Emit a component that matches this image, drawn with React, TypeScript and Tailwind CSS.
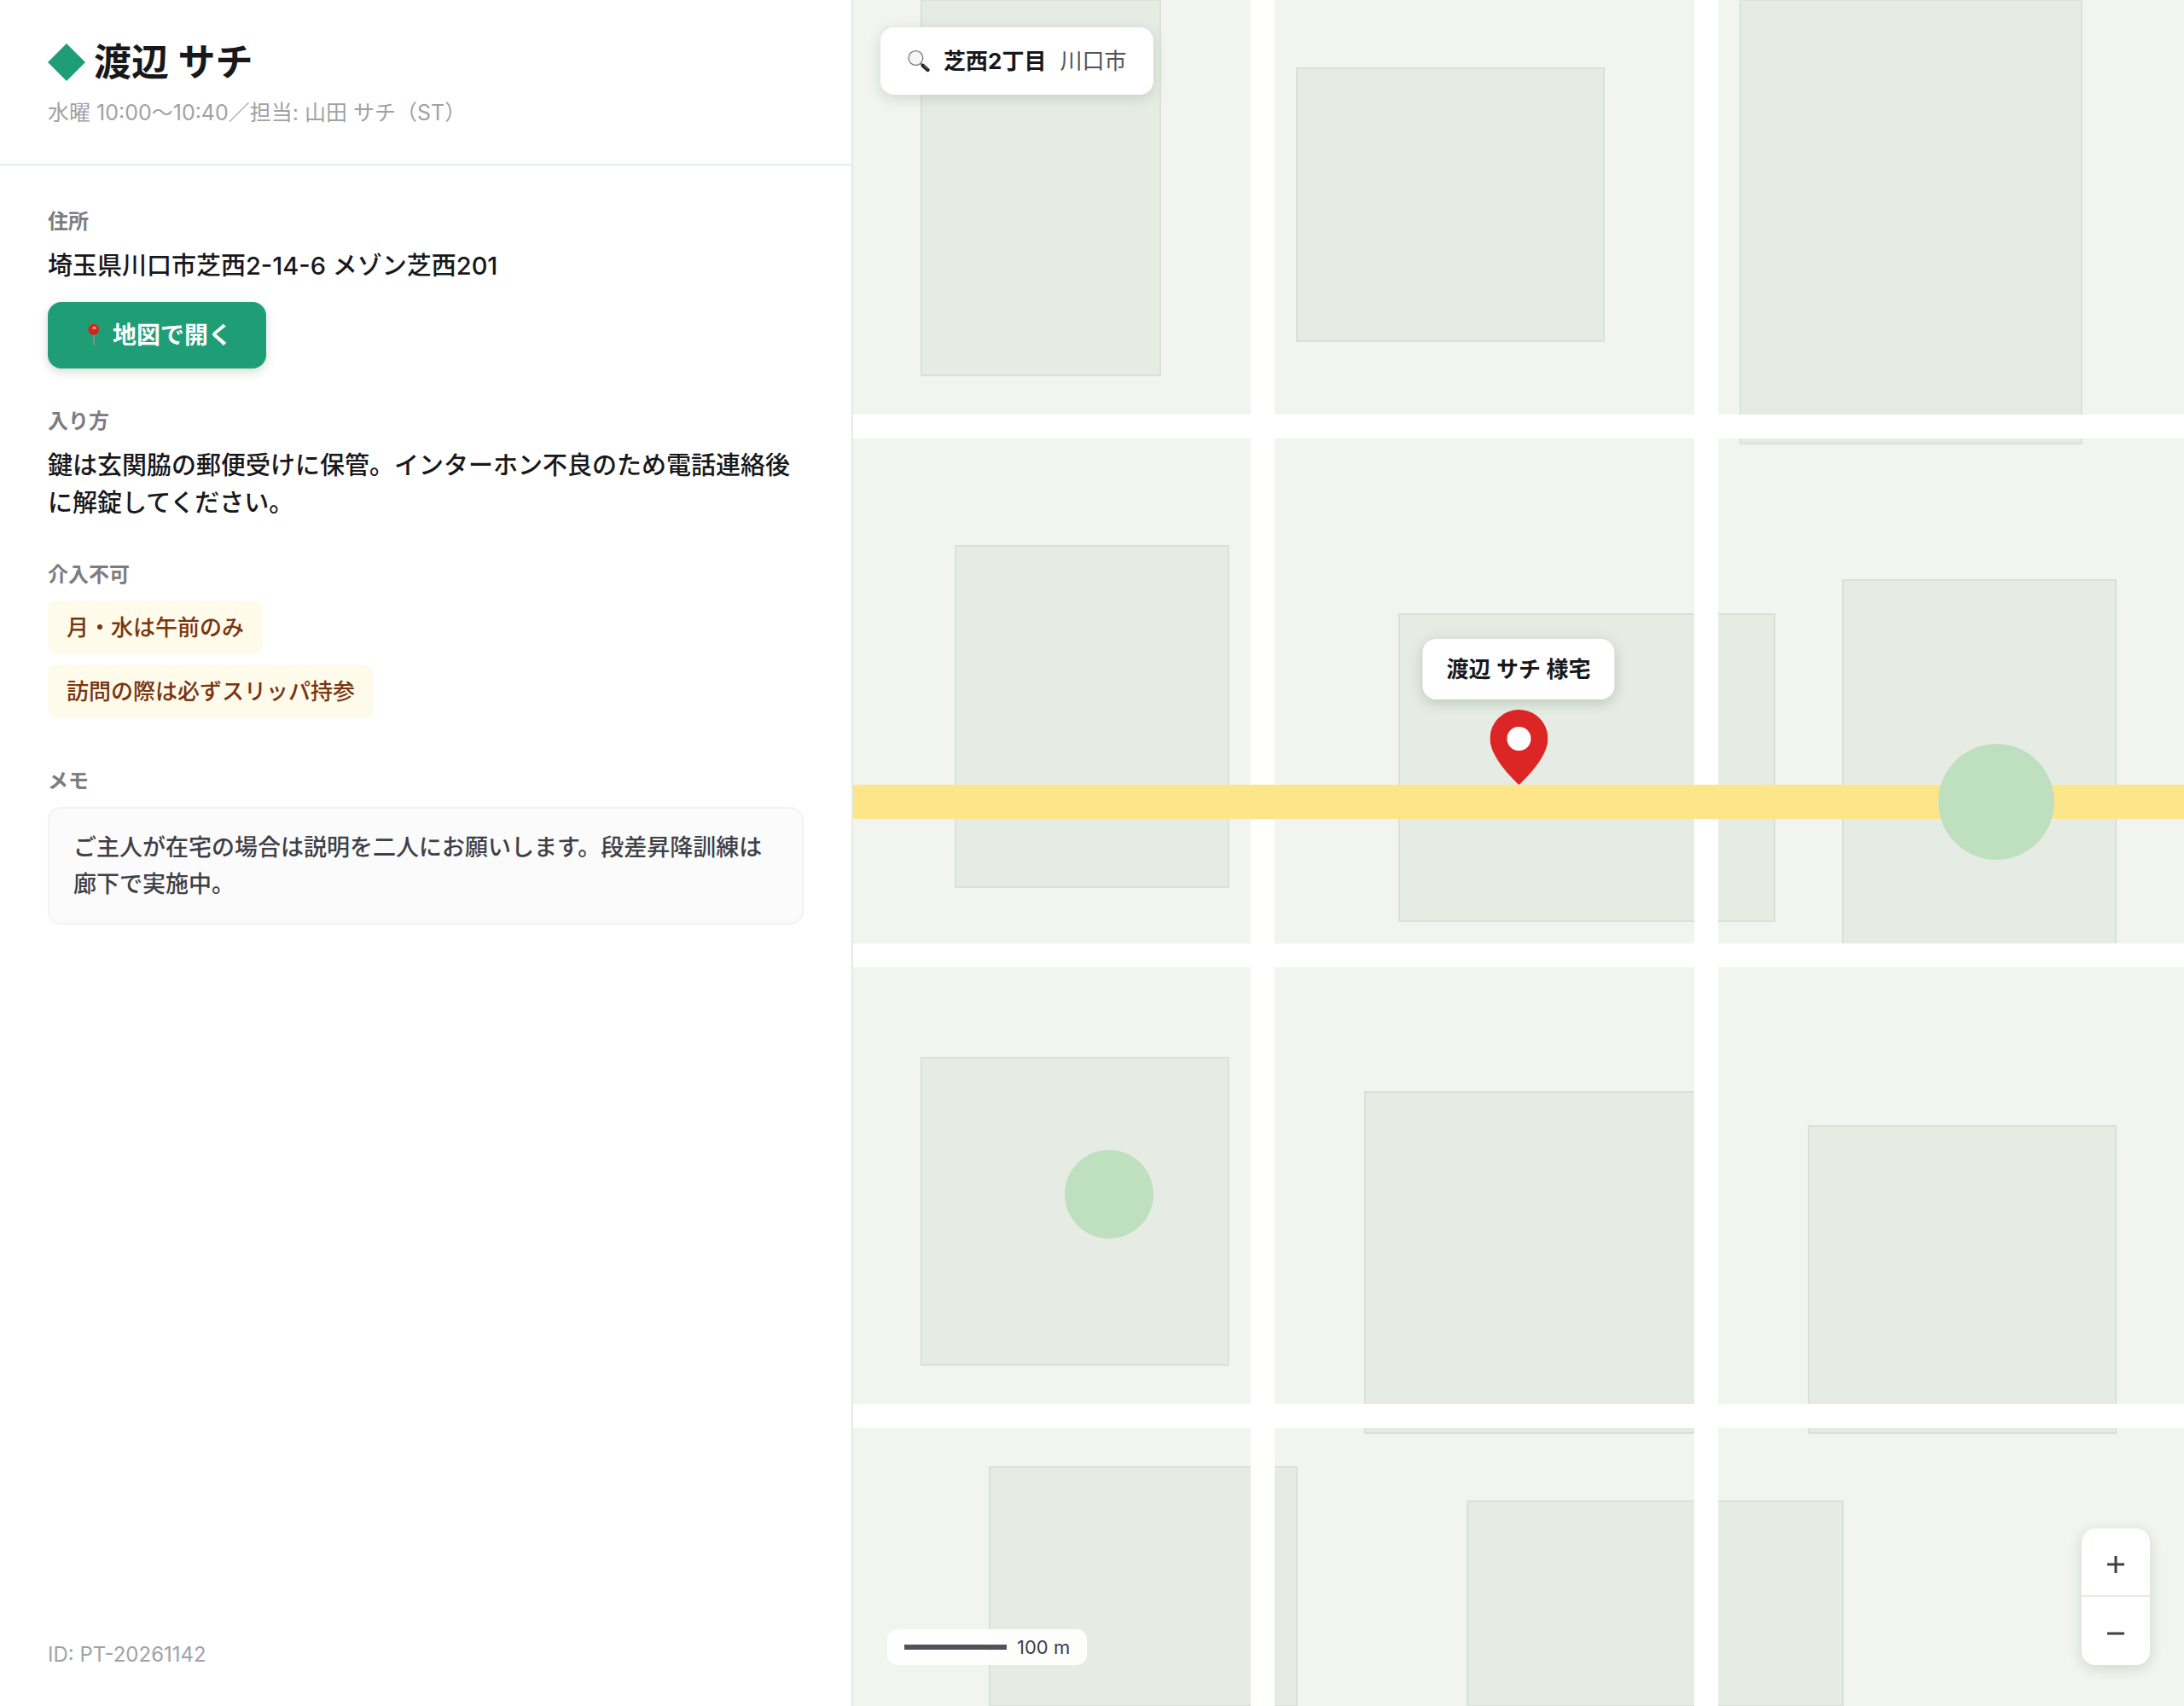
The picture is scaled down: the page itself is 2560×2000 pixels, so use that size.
import React from "react";

type Block = [number, number, number, number];

const blocks: Block[] = [
  [80, 0, 280, 440],
  [520, 80, 360, 320],
  [1040, 0, 400, 520],
  [120, 640, 320, 400],
  [640, 720, 440, 360],
  [1160, 680, 320, 440],
  [80, 1240, 360, 360],
  [600, 1280, 400, 400],
  [1120, 1320, 360, 360],
  [160, 1720, 360, 280],
  [720, 1760, 440, 240],
];

const cautions = ["月・水は午前のみ", "訪問の際は必ずスリッパ持参"];

function PushpinIcon() {
  return (
    <svg viewBox="0 0 28 28" className="h-7 w-7 shrink-0" aria-hidden="true">
      <path d="M13.800 12 14 25.200" stroke="#8f8a86" strokeWidth="1.800" strokeLinecap="round" />
      <ellipse cx="13.700" cy="7.200" rx="6.300" ry="6.400" fill="#d9251d" />
      <path d="M12.200 6.600c.4-1.800 1.200-2.600 2.200-2.800 1.200.2 2.200 1.200 2.400 2.800z" fill="#f3b79c" />
      <path d="M9.500 9.800c1.800 2.400 6.200 2.600 8.400 0" stroke="#b51a16" strokeWidth="1" fill="none" />
    </svg>
  );
}

function MagnifierIcon() {
  return (
    <svg viewBox="0 0 26 28" className="h-7 w-[26px] shrink-0" aria-hidden="true">
      <path d="m14.500 15.800 3 2.800" stroke="#77797a" strokeWidth="2" />
      <path d="M17.800 18.800 23.400 24" stroke="#262628" strokeWidth="4.400" strokeLinecap="round" />
      <path d="m18.600 18.400 4.600 4.400" stroke="#8b8b8d" strokeWidth="1" />
      <circle cx="9.400" cy="10" r="8.400" fill="#f4f5f4" stroke="#77797a" strokeWidth="1.300" />
    </svg>
  );
}

function Section({ title, children }: { title: string; children: React.ReactNode }) {
  return (
    <section className="flex flex-col gap-3">
      <h2 className="text-2xl leading-9 font-semibold text-[#7c7c81]">{title}</h2>
      {children}
    </section>
  );
}

function CityMap() {
  return (
    <svg viewBox="0 0 1560 2000" preserveAspectRatio="xMidYMid slice" className="absolute inset-0 h-full w-full" aria-hidden="true">
      <rect width="1560" height="2000" fill="#f1f4ef" />
      {blocks.map(([x, y, w, h]) => (
        <rect key={`${x}-${y}`} x={x} y={y} width={w} height={h} fill="#e6ece4" stroke="#d9e1d9" strokeWidth="2" />
      ))}
      <g fill="#ffffff">
        <rect y="486" width="1560" height="28" />
        <rect y="1106" width="1560" height="28" />
        <rect y="1646" width="1560" height="28" />
        <rect x="466" width="28" height="2000" />
        <rect x="986" width="28" height="2000" />
      </g>
      <rect y="920" width="1560" height="40" fill="#fde68a" />
      <circle cx="1340" cy="940" r="68" fill="#bfe0bf" />
      <circle cx="300" cy="1400" r="52" fill="#bfe0bf" />
    </svg>
  );
}

export default function App() {
  return (
    <div className="flex min-h-screen bg-white font-['Inter','Noto_Sans_CJK_JP',sans-serif] text-[#18181b]" lang="ja">
      <aside className="flex w-[1000px] shrink-0 flex-col border-r-2 border-[#e6eae6]">
        <header className="flex flex-col gap-1.5 border-b-2 border-[#e6ece6] px-14 py-10">
          <h1 className="flex items-center gap-2.5 text-[44px] leading-[66px] font-bold">
            <svg viewBox="0 0 44 44" className="h-11 w-11 shrink-0" aria-hidden="true">
              <path d="M22 0 44 22 22 44 0 22z" fill="#1f9e75" />
            </svg>
            渡辺 サチ
          </h1>
          <p className="text-[25px] leading-10 text-[#a1a1a6]">水曜 10:00〜10:40／担当: 山田 サチ（ST）</p>
        </header>

        <main className="flex flex-1 flex-col gap-11 px-14 pt-12">
          <Section title="住所">
            <p className="text-[29px] leading-11 font-medium">埼玉県川口市芝西2-14-6 メゾン芝西201</p>
            <button
              type="button"
              className="mt-2 flex h-[78px] items-center gap-2 self-start rounded-2xl bg-[#1f9e75] px-10 text-[28px] font-semibold text-white shadow-[0_4px_12px_rgba(20,60,20,0.18)]"
            >
              <PushpinIcon />
              地図で開く
            </button>
          </Section>
          <Section title="入り方">
            <p className="text-[29px] leading-11 font-medium">鍵は玄関脇の郵便受けに保管。インターホン不良のため電話連絡後に解錠してください。</p>
          </Section>
          <Section title="介入不可">
            <ul className="mb-3 flex flex-col items-start gap-3">
              {cautions.map((c) => (
                <li key={c} className="rounded-xl bg-[#fffbeb] px-[22px] py-3 text-[26px] leading-[39px] font-medium text-[#78350f]">
                  {c}
                </li>
              ))}
            </ul>
          </Section>
          <Section title="メモ">
            <p className="rounded-2xl border-2 border-[#f0f3ee] bg-[#fbfbfb] px-7 py-6 text-[27px] leading-[43px] font-medium text-[#3f3f46]">
              ご主人が在宅の場合は説明を二人にお願いします。段差昇降訓練は廊下で実施中。
            </p>
          </Section>
        </main>

        <footer className="px-14 pb-11 text-[24px] leading-8 text-[#a1a1a6]">ID: PT-20261142</footer>
      </aside>

      <div className="relative min-w-0 flex-1 overflow-hidden bg-[#f1f4ef]">
        <CityMap />

        <div className="absolute top-8 left-8 flex h-[79px] items-center gap-4 rounded-2xl bg-white px-8 text-[26px] shadow-[0_4px_16px_rgba(20,60,20,0.15)]">
          <MagnifierIcon />
          <span className="font-bold">芝西2丁目</span>
          <span className="text-[#52525b]">川口市</span>
        </div>

        <div className="absolute bottom-[54%] left-1/2 flex -translate-x-1/2 flex-col items-center gap-3">
          <div className="flex h-[71px] items-center rounded-2xl bg-white px-7 text-[26px] font-semibold whitespace-nowrap shadow-[0_4px_16px_rgba(20,60,20,0.2)]">
            渡辺 サチ 様宅
          </div>
          <svg viewBox="0 0 68 88" className="h-[88px] w-[68px]" aria-hidden="true">
            <path d="M34 0C15.200 0 0 15.200 0 34c0 24 34 54 34 54s34-30 34-54C68 15.200 52.800 0 34 0z" fill="#dc2626" />
            <circle cx="34" cy="34" r="14" fill="#ffffff" />
          </svg>
        </div>

        <div className="absolute bottom-12 left-10 flex h-[42px] items-center gap-3 rounded-xl bg-white/90 px-5 text-[22px] text-[#3f3f46]">
          <span className="h-1.5 w-30 bg-[#52525b]" />
          100 m
        </div>

        <div className="absolute right-10 bottom-12 flex w-20 flex-col overflow-hidden rounded-2xl bg-white text-[#3f3f46] shadow-[0_4px_16px_rgba(20,60,20,0.15)]">
          <button type="button" aria-label="拡大" className="flex h-20 items-center justify-center border-b-2 border-[#e6ece6] pt-1.5">
            <svg viewBox="0 0 20 20" className="h-5 w-5" fill="none" stroke="currentColor" strokeWidth="3" aria-hidden="true">
              <path d="M0 10h20M10 0v20" />
            </svg>
          </button>
          <button type="button" aria-label="縮小" className="flex h-20 items-center justify-center pt-1.5">
            <svg viewBox="0 0 20 20" className="h-5 w-5" fill="none" stroke="currentColor" strokeWidth="3" aria-hidden="true">
              <path d="M0 10h20" />
            </svg>
          </button>
        </div>
      </div>
    </div>
  );
}
